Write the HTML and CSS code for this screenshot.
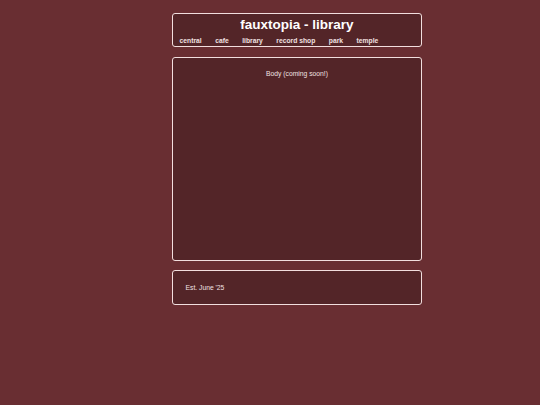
FILE: index.html
```html
<!DOCTYPE html>
<html lang="en">
<head>
<meta charset="utf-8">
<title>fauxtopia - library</title>
<link rel="stylesheet" href="styles.css">
</head>
<body>
<div class="page">
  <header class="box header">
    <h1 class="title">fauxtopia - library</h1>
    <nav class="nav">
      <a href="#">central</a>
      <a href="#">cafe</a>
      <a href="#">library</a>
      <a href="#">record shop</a>
      <a href="#">park</a>
      <a href="#">temple</a>
    </nav>
  </header>
  <main class="box main">
    <p class="placeholder">Body (coming soon!)</p>
  </main>
  <footer class="box footer">
    <p class="est">Est. June '25</p>
  </footer>
</div>
</body>
</html>
```
FILE: styles.css
```css
html, body {
  margin: 0;
  padding: 0;
  background: #692e32;
}
body {
  font-family: "Liberation Sans", Arial, sans-serif;
  color: #f1e1e1;
  -webkit-font-smoothing: antialiased;
}
.page {
  width: 250px;
  margin: 13px 0 0 172px;
  display: flex;
  flex-direction: column;
  gap: 9.5px;
}
.box {
  box-sizing: border-box;
  background: #532528;
  border: 1.5px solid #f2dede;
  border-radius: 3px;
}
.header {
  height: 34px;
  padding: 2.5px 6.5px 0;
}
.title {
  margin: 0;
  text-align: center;
  font-size: 13.5px;
  line-height: 15px;
  font-weight: bold;
  color: #ffffff;
}
.nav {
  display: flex;
  gap: 13.5px;
  margin-top: 5px;
  font-size: 6.75px;
  line-height: 7.5px;
  font-weight: bold;
}
.nav a {
  color: #f1e1e1;
  text-decoration: none;
}
.main {
  height: 204px;
  padding-top: 12px;
}
.placeholder {
  margin: 0;
  text-align: center;
  font-size: 6.75px;
  line-height: 7.5px;
}
.footer {
  height: 35px;
  padding: 12.5px 12.5px 0;
}
.est {
  margin: 0;
  font-size: 6.75px;
  line-height: 7.5px;
}
```
